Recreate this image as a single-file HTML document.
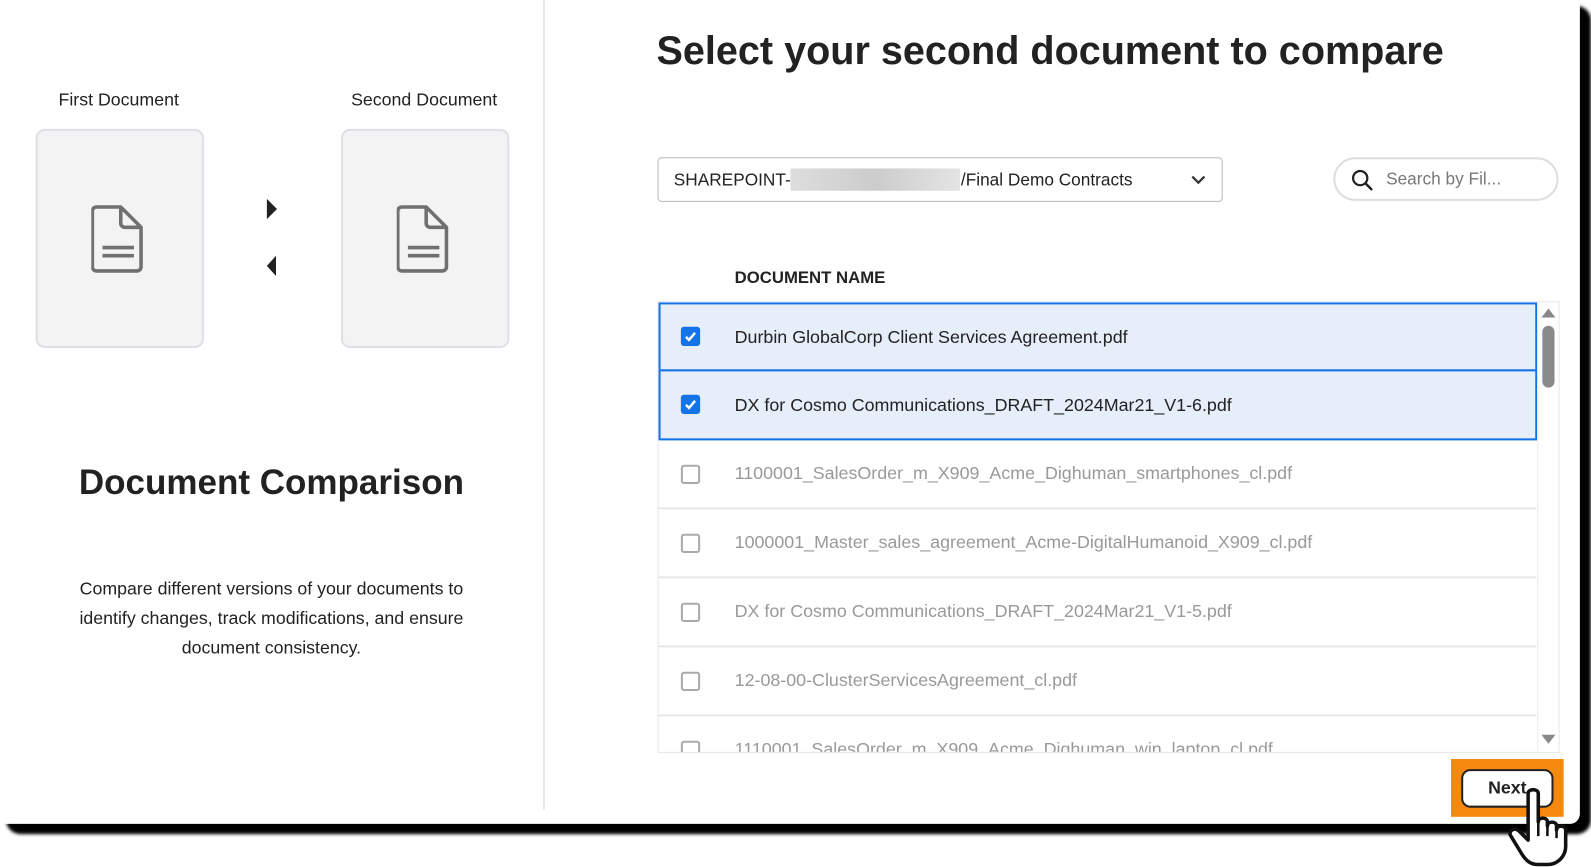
<!DOCTYPE html>
<html><head><meta charset="utf-8"><style>
*{margin:0;padding:0;box-sizing:border-box}
html,body{width:1591px;height:866px;overflow:hidden;background:#fff;font-family:"Liberation Sans",sans-serif;color:#222}
#s{position:absolute;left:0;top:0;width:1568px;height:853px;transform:scale(1.0147);transform-origin:0 0}
.a{position:absolute}
.shadow{left:6px;top:6px;width:1562px;height:816px;background:#000;border-radius:14px;filter:blur(1.5px)}
.panel{left:0;top:0;width:1557px;height:812px;background:#fff;border-radius:0 0 10px 0}
.lbl{font-size:17.5px;color:#222;text-align:center;width:200px}
.card{width:166px;height:216px;top:127px;background:#f3f3f3;border:2px solid #dde1e6;border-radius:9px}
.row{left:0;width:865px;height:68px;border-bottom:2px solid #e6e6e6;font-size:17.6px;color:#999}
.row span{position:absolute;left:75px;top:22px;white-space:nowrap}
.cb{position:absolute;left:22px;top:24px;width:19px;height:19px;border:2px solid #aaa;border-radius:3px;background:#fff}
.row.sel{background:#e6eefa;color:#222;border:2px solid #1473e6;width:866px}
.row.sel span{left:73px}
.row.sel .cb{left:20px;top:22px;background:#1473e6;border-color:#1473e6}
</style></head><body><div id="s">
<div class="a shadow"></div>
<div class="a panel"></div>
<div class="a" style="left:535px;top:0;width:2px;height:798px;background:#e8e8e8"></div>

<div class="a lbl" style="left:17px;top:88px">First Document</div>
<div class="a lbl" style="left:318px;top:88px">Second Document</div>
<div class="a card" style="left:35px"></div>
<div class="a card" style="left:336px"></div>
<svg class="a" style="left:90px;top:202px" width="54" height="68" viewBox="0 0 54 68"><path d="M5 2h24l20 20v39a4 4 0 0 1-4 4H5a4 4 0 0 1-4-4V6a4 4 0 0 1 4-4z M29 2v16a4 4 0 0 0 4 4h16" fill="none" stroke="#707070" stroke-width="3.5" stroke-linejoin="round"/><path d="M11 42h31M11 50h31" stroke="#707070" stroke-width="3.5"/></svg>
<svg class="a" style="left:391px;top:202px" width="54" height="68" viewBox="0 0 54 68"><path d="M5 2h24l20 20v39a4 4 0 0 1-4 4H5a4 4 0 0 1-4-4V6a4 4 0 0 1 4-4z M29 2v16a4 4 0 0 0 4 4h16" fill="none" stroke="#707070" stroke-width="3.5" stroke-linejoin="round"/><path d="M11 42h31M11 50h31" stroke="#707070" stroke-width="3.5"/></svg>
<svg class="a" style="left:262px;top:196px" width="12" height="76"><path d="M1 0l10 10L1 20z" fill="#222"/><path d="M10 56L1 66l9 10z" fill="#222"/></svg>

<div class="a" style="left:0;width:535px;top:457px;text-align:center;font-size:34.5px;font-weight:bold;color:#222">Document Comparison</div>
<div class="a" style="left:50px;width:435px;top:566px;text-align:center;font-size:17.5px;line-height:29px;color:#222">Compare different versions of your documents to identify changes, track modifications, and ensure document consistency.</div>

<div class="a" style="left:647px;top:29px;font-size:39px;font-weight:bold;color:#222;white-space:nowrap">Select your second document to compare</div>

<div class="a" style="left:648px;top:155px;width:557px;height:44px;border:1.5px solid #b8b8b8;border-radius:4px;font-size:17px;color:#222">
<span class="a" style="left:15px;top:12px">SHAREPOINT-</span>
<div class="a" style="left:130px;top:10px;width:167px;height:22px;background:linear-gradient(90deg,#ddd,#ccc 50%,#e4e4e4)"></div>
<span class="a" style="left:298px;top:12px">/Final Demo Contracts</span>
<svg class="a" style="left:525px;top:16px" width="14" height="10"><path d="M1 2l6 6 6-6" fill="none" stroke="#333" stroke-width="2.2"/></svg>
</div>

<div class="a" style="left:1314px;top:155px;width:222px;height:43px;border:2px solid #ddd;border-radius:22px">
<svg class="a" style="left:15px;top:9px" width="24" height="24"><circle cx="9.5" cy="9.5" r="7" fill="none" stroke="#222" stroke-width="2.2"/><path d="M14.5 14.5l6 6" stroke="#222" stroke-width="2.4" stroke-linecap="round"/></svg>
<span class="a" style="left:50px;top:10px;font-size:17px;color:#777">Search by Fil...</span>
</div>

<div class="a" style="left:724px;top:265px;font-size:16.5px;font-weight:bold;color:#222">DOCUMENT NAME</div>

<div class="a" style="left:648px;top:297px;width:889px;height:445px;border:1px solid #e6e6e6;overflow:hidden;background:#fff">
<div class="a row sel" style="top:0;height:68px"><div class="cb"><svg width="15" height="15" style="position:absolute;left:0;top:0"><path d="M3 8l3 3 6-7" fill="none" stroke="#fff" stroke-width="2.4"/></svg></div><span style="top:22px">Durbin GlobalCorp Client Services Agreement.pdf</span></div>
<div class="a row sel" style="top:66px;height:70px"><div class="cb" style="top:23px"><svg width="15" height="15" style="position:absolute;left:0;top:0"><path d="M3 8l3 3 6-7" fill="none" stroke="#fff" stroke-width="2.4"/></svg></div><span style="top:23px">DX for Cosmo Communications_DRAFT_2024Mar21_V1-6.pdf</span></div>
<div class="a row" style="top:136px"><div class="cb"></div><span>1100001_SalesOrder_m_X909_Acme_Dighuman_smartphones_cl.pdf</span></div>
<div class="a row" style="top:204px"><div class="cb"></div><span>1000001_Master_sales_agreement_Acme-DigitalHumanoid_X909_cl.pdf</span></div>
<div class="a row" style="top:272px"><div class="cb"></div><span>DX for Cosmo Communications_DRAFT_2024Mar21_V1-5.pdf</span></div>
<div class="a row" style="top:340px"><div class="cb"></div><span>12-08-00-ClusterServicesAgreement_cl.pdf</span></div>
<div class="a row" style="top:408px"><div class="cb"></div><span>1110001_SalesOrder_m_X909_Acme_Dighuman_win_laptop_cl.pdf</span></div>
<div class="a" style="left:866px;top:0;width:23px;height:445px;background:#fff;border-left:1px solid #eee"></div>
<svg class="a" style="left:870px;top:5px" width="14" height="10"><path d="M0 10L7 1l7 9z" fill="#888"/></svg>
<div class="a" style="left:871px;top:23px;width:12px;height:61px;background:#8a8a8a;border-radius:6px"></div>
<svg class="a" style="left:870px;top:426px" width="14" height="10"><path d="M0 0h14L7 9z" fill="#888"/></svg>
</div>

<div class="a" style="left:1430px;top:748px;width:111px;height:57px;background:#f5890f"></div>
<div class="a" style="left:1440px;top:758px;width:91px;height:38px;background:#fff;border:2px solid #222;border-radius:9px;font-size:17.5px;font-weight:bold;color:#222;text-align:center;line-height:32px">Next</div>
<svg class="a" style="left:1484px;top:776px" width="70" height="78" viewBox="0 0 70 78"><path d="M22 6c0-5 10-5 10 0v28c0-5 9-5 9 0v4c0-5 9-5 9 0v4c0-5 9-5 9 0v16c0 10-8 18-18 18H32c-8 0-12-4-16-10L5 48c-3-4 3-10 8-5l9 9z" fill="#fff" stroke="#111" stroke-width="3.5" stroke-linejoin="round"/><path d="M32 34v14M41 38v10M50 42v8" stroke="#111" stroke-width="2.5"/></svg>
</div></body></html>
